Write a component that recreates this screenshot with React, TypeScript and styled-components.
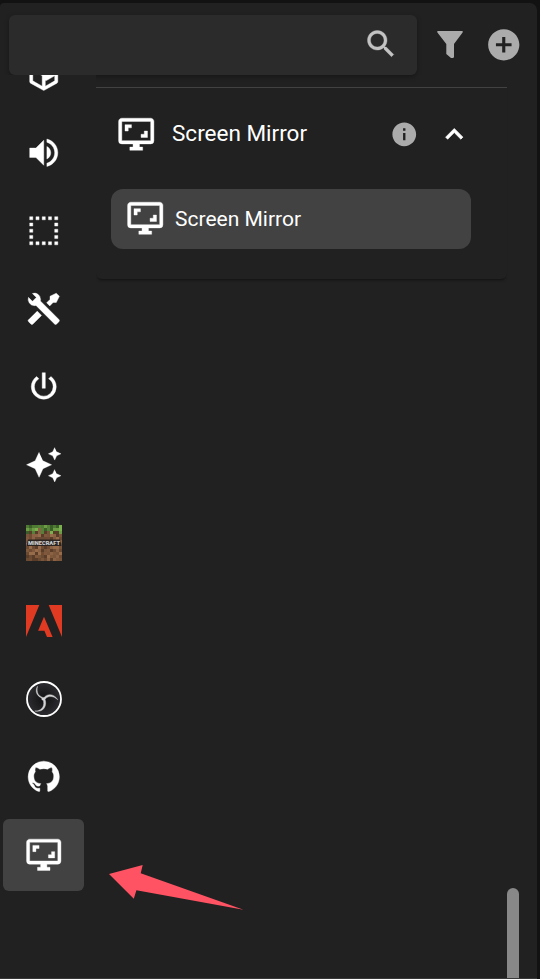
import React from "react";
import styled, { createGlobalStyle } from "styled-components";

const GlobalStyle = createGlobalStyle`
  * { box-sizing: border-box; }
  html, body { margin: 0; background: #121212; }
  body { font-family: Roboto, "Liberation Sans", sans-serif; color: #fff; overflow: hidden; }
  svg { display: block; flex: none; overflow: visible; }
`;

const Frame = styled.div`
  width: 540px;
  height: 979px;
  padding: 3px 3px 0 0;
  overflow: hidden;
  background: #121212;
`;

const Panel = styled.main`
  position: relative;
  display: flex;
  flex-direction: column;
  height: 976px;
  background: #212121;
  border-radius: 4px 7px 0 0;
  border-bottom: 1px solid #393939;
  overflow: hidden;
`;

const Header = styled.header`
  position: relative;
  z-index: 1;
  flex: none;
  display: flex;
  align-items: center;
  height: 72px;
  padding: 12px 0 0 9px;
`;

const SearchBox = styled.div`
  display: flex;
  align-items: center;
  justify-content: flex-end;
  width: 408px;
  height: 60px;
  padding-right: 18px;
  padding-bottom: 2px;
  background: #2b2b2b;
  border-radius: 6px;
  box-shadow: 0 2px 5px rgba(0, 0, 0, 0.3);
`;

const HeaderButton = styled.button<{ $gap: number }>`
  display: flex;
  margin: 0 0 0 ${(p) => p.$gap}px;
  padding: 0 0 1px;
  border: 0;
  background: none;
  color: #ababab;
`;

const Body = styled.div`
  flex: 1;
  min-height: 0;
  display: flex;
  overflow: hidden;
`;

const Sidebar = styled.nav`
  position: relative;
  z-index: 2;
  flex: none;
  width: 96px;
  overflow: hidden;
  background: #212121;
`;

const CategoryList = styled.div`
  display: flex;
  flex-direction: column;
  gap: 6px;
  margin: -36px 0 0 3px;
`;

const Category = styled.button<{ $active?: boolean; $raster?: boolean }>`
  display: flex;
  align-items: center;
  justify-content: center;
  width: 81px;
  height: 72px;
  padding: ${(p) => (p.$raster ? "0" : "0 0 1px")};
  border: 0;
  border-radius: 6px;
  color: #fff;
  background: ${(p) => (p.$active ? "#424242" : "transparent")};
`;

const Content = styled.section`
  width: 411px;
  flex: none;
  padding-top: 12px;
`;

const Card = styled.article`
  height: 192px;
  border-top: 1px solid #424242;
  border-radius: 0 0 6px 6px;
  background: #212121;
  box-shadow: 0 3px 3px -2px rgba(0, 0, 0, 0.5);
`;

const CardHeader = styled.div`
  display: flex;
  align-items: center;
  height: 92px;
  padding: 0 36px 0 20.5px;
`;

const CardTitle = styled.h2`
  flex: 1;
  margin: 0 0 3px 17px;
  font-size: 22.5px;
  font-weight: 400;
  line-height: 30px;
`;

const ChevronSlot = styled.span`
  display: flex;
  margin-left: 18.5px;
`;

const InfoSlot = styled.span`
  display: flex;
  color: #ababab;
`;

const Action = styled.div`
  display: flex;
  align-items: center;
  width: 360px;
  height: 60px;
  margin: 9px 0 0 15px;
  padding: 0 0 2px 14.5px;
  border-radius: 12px;
  background: #424242;
  font-size: 21px;
  line-height: 28px;
`;

const ActionLabel = styled.span`
  margin: 2px 0 0 11px;
`;

const ScrollTrack = styled.div`
  flex: none;
  display: flex;
  flex-direction: column;
  justify-content: flex-end;
  width: 12px;
`;

const ScrollThumb = styled.div`
  height: 90px;
  border-radius: 6px 6px 0 0;
  background: #888;
`;

const Pointer = styled.svg`
  position: absolute;
  left: 109px;
  top: 862px;
  z-index: 3;
`;

const paths = {
  package:
    "M2,10.96C1.5,10.68 1.35,10.07 1.63,9.59L3.13,7C3.24,6.8 3.41,6.66 3.6,6.58L11.43,2.18C11.59,2.06 11.79,2 12,2C12.21,2 12.41,2.06 12.57,2.18L20.47,6.62C20.66,6.72 20.82,6.88 20.91,7.08L22.36,9.6C22.64,10.08 22.47,10.69 22,10.96L21,11.54V16.5C21,16.88 20.79,17.21 20.47,17.38L12.57,21.82C12.41,21.94 12.21,22 12,22C11.79,22 11.59,21.94 11.43,21.82L3.53,17.38C3.21,17.21 3,16.88 3,16.5V10.96C2.7,11.13 2.32,11.14 2,10.96M12,4.15V10.85L17.96,7.5L12,4.15M5,15.91L11,19.29V12.58L5,9.21V15.91M19,15.91V12.69L14,15.59C13.67,15.77 13.3,15.76 13,15.6V19.29L19,15.91Z",
  volume:
    "M14,3.23V5.29C16.89,6.15 19,8.83 19,12C19,15.17 16.89,17.84 14,18.7V20.77C18,19.86 21,16.28 21,12C21,7.72 18,4.14 14,3.23M16.5,12C16.5,10.23 15.5,8.71 14,7.97V16C15.5,15.29 16.5,13.76 16.5,12M3,9V15H7L12,20V4L7,9H3Z",
  select:
    "M3,3H5V5H3ZM7,3H9V5H7ZM11,3H13V5H11ZM15,3H17V5H15ZM19,3H21V5H19ZM3,7H5V9H3ZM19,7H21V9H19ZM3,11H5V13H3ZM19,11H21V13H19ZM3,15H5V17H3ZM19,15H21V17H19ZM3,19H5V21H3ZM7,19H9V21H7ZM11,19H13V21H11ZM15,19H17V21H15ZM19,19H21V21H19Z",
  tools:
    "M21.71 20.29L20.29 21.71A1 1 0 0 1 18.88 21.71L7 9.85A3.81 3.81 0 0 1 6 10A4 4 0 0 1 2.22 4.7L4.76 7.24L5.29 6.71L6.71 5.29L7.24 4.76L4.7 2.22A4 4 0 0 1 10 6A3.81 3.81 0 0 1 9.85 7L21.71 18.88A1 1 0 0 1 21.71 20.29M2.29 18.88A1 1 0 0 0 2.29 20.29L3.71 21.71A1 1 0 0 0 5.12 21.71L10.59 16.25L7.76 13.42M20 2L16 4V6L13.83 8.17L15.83 10.17L18 8H20L22 4Z",
  power:
    "M16.56,5.44L15.11,6.89C16.84,7.94 18,9.83 18,12A6,6 0 0,1 12,18A6,6 0 0,1 6,12C6,9.83 7.16,7.94 8.88,6.88L7.44,5.44C5.36,6.88 4,9.28 4,12A8,8 0 0,0 12,20A8,8 0 0,0 20,12C20,9.28 18.64,6.88 16.56,5.44M13,3H11V13H13V3Z",
  creation:
    "M19,1L17.74,3.75L15,5L17.74,6.26L19,9L20.25,6.26L23,5L20.25,3.75M9,4L6.5,9.5L1,12L6.5,14.5L9,20L11.5,14.5L17,12L11.5,9.5M19,15L17.74,17.74L15,19L17.74,20.25L19,23L20.25,20.25L23,19L20.25,17.74",
  github:
    "M12,2A10,10 0 0,0 2,12C2,16.42 4.87,20.17 8.84,21.5C9.34,21.58 9.5,21.27 9.5,21C9.5,20.77 9.5,20.14 9.5,19.31C6.73,19.91 6.14,17.97 6.14,17.97C5.68,16.81 5.03,16.5 5.03,16.5C4.12,15.88 5.1,15.9 5.1,15.9C6.1,15.97 6.63,16.93 6.63,16.93C7.5,18.45 8.97,18 9.54,17.76C9.63,17.11 9.89,16.67 10.17,16.42C7.95,16.17 5.62,15.31 5.62,11.5C5.62,10.39 6,9.5 6.65,8.79C6.55,8.54 6.2,7.5 6.75,6.15C6.75,6.15 7.59,5.88 9.5,7.17C10.29,6.95 11.15,6.84 12,6.84C12.85,6.84 13.71,6.95 14.5,7.17C16.41,5.88 17.25,6.15 17.25,6.15C17.8,7.5 17.45,8.54 17.35,8.79C18,9.5 18.38,10.39 18.38,11.5C18.38,15.32 16.04,16.16 13.81,16.41C14.17,16.72 14.5,17.33 14.5,18.26C14.5,19.6 14.5,20.68 14.5,21C14.5,21.27 14.66,21.59 15.17,21.5C19.14,20.16 22,16.42 22,12A10,10 0 0,0 12,2Z",
  monitor:
    "M9,6H5V10H7V8H9V6ZM19,10H17V12H15V14H19V10ZM21,16H3V4H21V16ZM21,2H3C1.89,2 1,2.89 1,4V16A2,2 0 0,0 3,18H10V20H8V22H16V20H14V18H21A2,2 0 0,0 23,16V4C23,2.89 22.1,2 21,2Z",
  search:
    "M15.5 14h-.79l-.28-.27C15.41 12.59 16 11.11 16 9.5 16 5.91 13.09 3 9.5 3S3 5.91 3 9.5 5.91 16 9.5 16c1.61 0 3.09-.59 4.23-1.57l.27.28v.79l5 4.99L20.49 19l-4.99-5zm-6 0C7.01 14 5 11.99 5 9.5S7.01 5 9.5 5 14 7.01 14 9.5 11.99 14 9.5 14z",
  addCircle:
    "M12 2C6.48 2 2 6.48 2 12s4.48 10 10 10 10-4.48 10-10S17.52 2 12 2zm5 11h-4v4h-2v-4H7v-2h4V7h2v4h4v2z",
  info: "M12 2C6.48 2 2 6.48 2 12s4.48 10 10 10 10-4.48 10-10S17.52 2 12 2zm1 15h-2v-6h2v6zm0-8h-2V7h2v2z",
  chevronUp: "M7.41,15.41L12,10.83L16.59,15.41L18,14L12,8L6,14L7.41,15.41Z",
};

interface IconProps {
  name: keyof typeof paths;
  size?: number;
  color?: string;
  weight?: number;
}

function Icon({ name, size = 37.5, color = "currentColor", weight = 0.25 }: IconProps) {
  return (
    <svg width={size} height={size} viewBox="0 0 24 24" fill={color} stroke={color} strokeWidth={weight}>
      <path d={paths[name]} />
    </svg>
  );
}

const FilterIcon = () => (
  <svg width="26" height="27" viewBox="0 0 26 27" fill="currentColor">
    <path d="M0.7 0H25.3Q26.2 0.4 25.6 1.4L17 13V26Q16.8 27 15.6 27H14L9.3 23V13L0.4 1.4Q-0.2 0.4 0.7 0Z" />
  </svg>
);

const dirt = ["#79553a", "#8b6243", "#593d29", "#966c4a", "#6b4a33", "#80593d", "#704c34"];
const grass = ["#4f7a32", "#6c9c44", "#3b5f28", "#7bb04e", "#558238"];
const grassDepth = [3, 2, 3, 2, 1, 3, 2, 2, 3, 2, 2, 3];

const MinecraftLogo = () => (
  <svg width="36" height="36" viewBox="0 0 36 36">
    <g shapeRendering="crispEdges">
      {Array.from({ length: 144 }, (_, i) => {
        const x = i % 12;
        const y = Math.floor(i / 12);
        const n = Math.floor(Math.abs(Math.sin(x * 12.99 + y * 78.23) * 43758.5)) % 35;
        const tone = y < grassDepth[x] ? grass[n % 5] : dirt[n % 7];
        return <rect key={i} x={x * 3} y={y * 3} width="3" height="3" fill={tone} />;
      })}
    </g>
    <path d="M2 14.5H34L35.5 21H0.5Z" fill="#2b2420" />
    <text
      x="2"
      y="20"
      textLength="32"
      lengthAdjust="spacingAndGlyphs"
      fontFamily="Roboto, sans-serif"
      fontWeight="900"
      fontSize="6"
      fill="#d0d0d0"
    >
      MINECRAFT
    </text>
  </svg>
);

const AdobeLogo = () => (
  <svg width="36" height="32" viewBox="0 0 36 32" fill="#e13a22">
    <path d="M0 0H13.3L0 32ZM22.7 0H36V32ZM18 11.7L26.6 32H21L18.4 25.7H12.1Z" />
  </svg>
);

const ObsLogo = () => (
  <svg width="36" height="36" viewBox="0 0 36 36">
    <defs>
      <radialGradient id="obs-fill">
        <stop offset="0" stopColor="#101012" />
        <stop offset="1" stopColor="#2d2c30" />
      </radialGradient>
    </defs>
    <circle cx="18" cy="18" r="17" fill="url(#obs-fill)" stroke="#fff" strokeWidth="1.8" />
    <g fill="#d4d4d4" stroke="#d4d4d4" strokeWidth="0.4">
      <path d="M11.5 5.2C9 9.5 10 14.5 15.6 16.9L16 19L18.2 19.3C18.7 18.8 19.4 18.2 19.2 16.8L16.8 16.4C12.5 14.8 10.2 11.6 11.5 5.2Z" />
      <path d="M17.8 16.9C20 13 27.5 11.5 31.8 18.8C28 15.2 23 14.3 19.7 17.5L18.3 18.6Z" />
      <path d="M17.2 18.3L19.1 18.6C21.3 24.5 17.7 32 8.8 30C14.2 30.4 18.8 26.3 17.5 20.2Z" />
    </g>
  </svg>
);

const categories: { id: string; icon: React.ReactNode; active?: boolean; raster?: boolean }[] = [
  { id: "package", icon: <Icon name="package" /> },
  { id: "volume", icon: <Icon name="volume" /> },
  { id: "select", icon: <Icon name="select" /> },
  { id: "tools", icon: <Icon name="tools" /> },
  { id: "power", icon: <Icon name="power" /> },
  { id: "creation", icon: <Icon name="creation" /> },
  { id: "minecraft", icon: <MinecraftLogo />, raster: true },
  { id: "adobe", icon: <AdobeLogo />, raster: true },
  { id: "obs", icon: <ObsLogo />, raster: true },
  { id: "github", icon: <Icon name="github" /> },
  { id: "monitor", icon: <Icon name="monitor" />, active: true },
];

export default function App() {
  return (
    <Frame>
      <GlobalStyle />
      <Panel>
        <Header>
          <SearchBox>
            <Icon name="search" size={36} color="#c3c3c3" />
          </SearchBox>
          <HeaderButton $gap={20} aria-label="Filter">
            <FilterIcon />
          </HeaderButton>
          <HeaderButton $gap={22} aria-label="Add">
            <Icon name="addCircle" size={37.5} weight={0} />
          </HeaderButton>
        </Header>
        <Body>
          <Sidebar>
            <CategoryList>
              {categories.map((c) => (
                <Category key={c.id} $active={c.active} $raster={c.raster} aria-label={c.id}>
                  {c.icon}
                </Category>
              ))}
            </CategoryList>
          </Sidebar>
          <Content>
            <Card>
              <CardHeader>
                <Icon name="monitor" size={38.5} />
                <CardTitle>Screen Mirror</CardTitle>
                <InfoSlot>
                  <Icon name="info" size={28.5} weight={0} />
                </InfoSlot>
                <ChevronSlot>
                  <Icon name="chevronUp" size={34.5} weight={0.5} />
                </ChevronSlot>
              </CardHeader>
              <Action>
                <Icon name="monitor" size={38.5} />
                <ActionLabel>Screen Mirror</ActionLabel>
              </Action>
            </Card>
          </Content>
          <ScrollTrack>
            <ScrollThumb />
          </ScrollTrack>
        </Body>
        <Pointer width="135" height="46" viewBox="0 0 135 46" fill="#ff5363">
          <path d="M0 9L33.7 0L31.7 8.3L134.5 44.8L27.4 25.2L24.8 33.7Z" />
        </Pointer>
      </Panel>
    </Frame>
  );
}
